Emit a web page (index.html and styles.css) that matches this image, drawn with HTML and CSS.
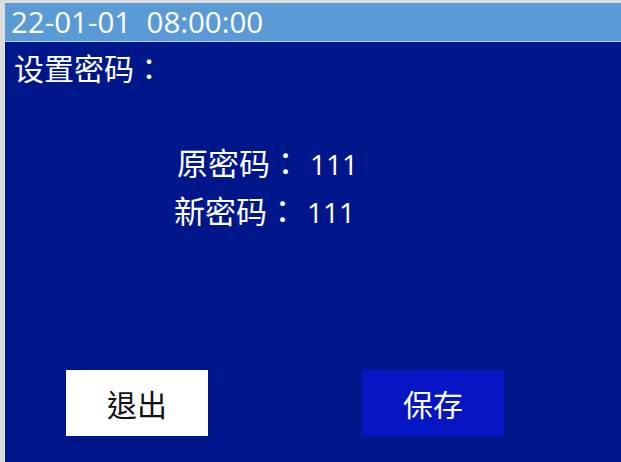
FILE: index.html
```html
<!DOCTYPE html>
<html>
<head>
<meta charset="utf-8">
<link rel="stylesheet" href="styles.css">
</head>
<body>
<div class="screen">
  <div class="header">22-01-01&nbsp;&nbsp;08:00:00</div>
  <div class="main">
    <div class="title">设置密码：</div>
    <div class="fields">
      <div class="row row-old">原密码：<span class="num">111</span></div>
      <div class="row row-new">新密码：<span class="num">111</span></div>
    </div>
    <div class="buttons">
      <div class="btn btn-exit">退出</div>
      <div class="btn btn-save">保存</div>
    </div>
  </div>
</div>
</body>
</html>
```
FILE: styles.css
```css
html, body {
  margin: 0;
  padding: 0;
}
body {
  background: #dcdcdc;
  width: 621px;
  height: 462px;
  overflow: hidden;
}
.screen {
  margin-top: 3px;
  margin-left: 5px;
  width: 616px;
  height: 459px;
  display: flex;
  flex-direction: column;
  font-family: "Noto Sans CJK TC", "Noto Sans CJK SC", sans-serif;
  color: #ffffff;
}
.header {
  height: 38px;
  line-height: 38px;
  background: #5b9bd5;
  border-bottom: 1px solid #b4d3ee;
  padding-left: 6px;
  font-family: "Open Sans", "Noto Sans CJK SC", sans-serif;
  font-size: 29.5px;
  white-space: nowrap;
}
.main {
  flex: 1;
  background: #00178c;
  display: flex;
  flex-direction: column;
}
.title {
  margin-top: 5px;
  padding-left: 9px;
  font-size: 30px;
  line-height: 40px;
  height: 40px;
}
.fields {
  margin-top: 51px;
  padding-left: 172px;
  display: flex;
  flex-direction: column;
}
.row {
  font-size: 31px;
  line-height: 48px;
  height: 48px;
  white-space: nowrap;
}
.row-new {
  margin-left: -3px;
}
.num {
  font-family: "Open Sans", sans-serif;
  font-size: 28px;
  margin-left: 9px;
}
.buttons {
  margin-top: 136px;
  display: flex;
  padding-left: 61px;
  gap: 154px;
}
.btn {
  width: 142px;
  height: 66px;
  display: flex;
  align-items: center;
  justify-content: center;
  font-size: 30px;
}
.btn-exit {
  background: #ffffff;
  color: #111111;
}
.btn-save {
  background: #0716c4;
  color: #ffffff;
}
```
